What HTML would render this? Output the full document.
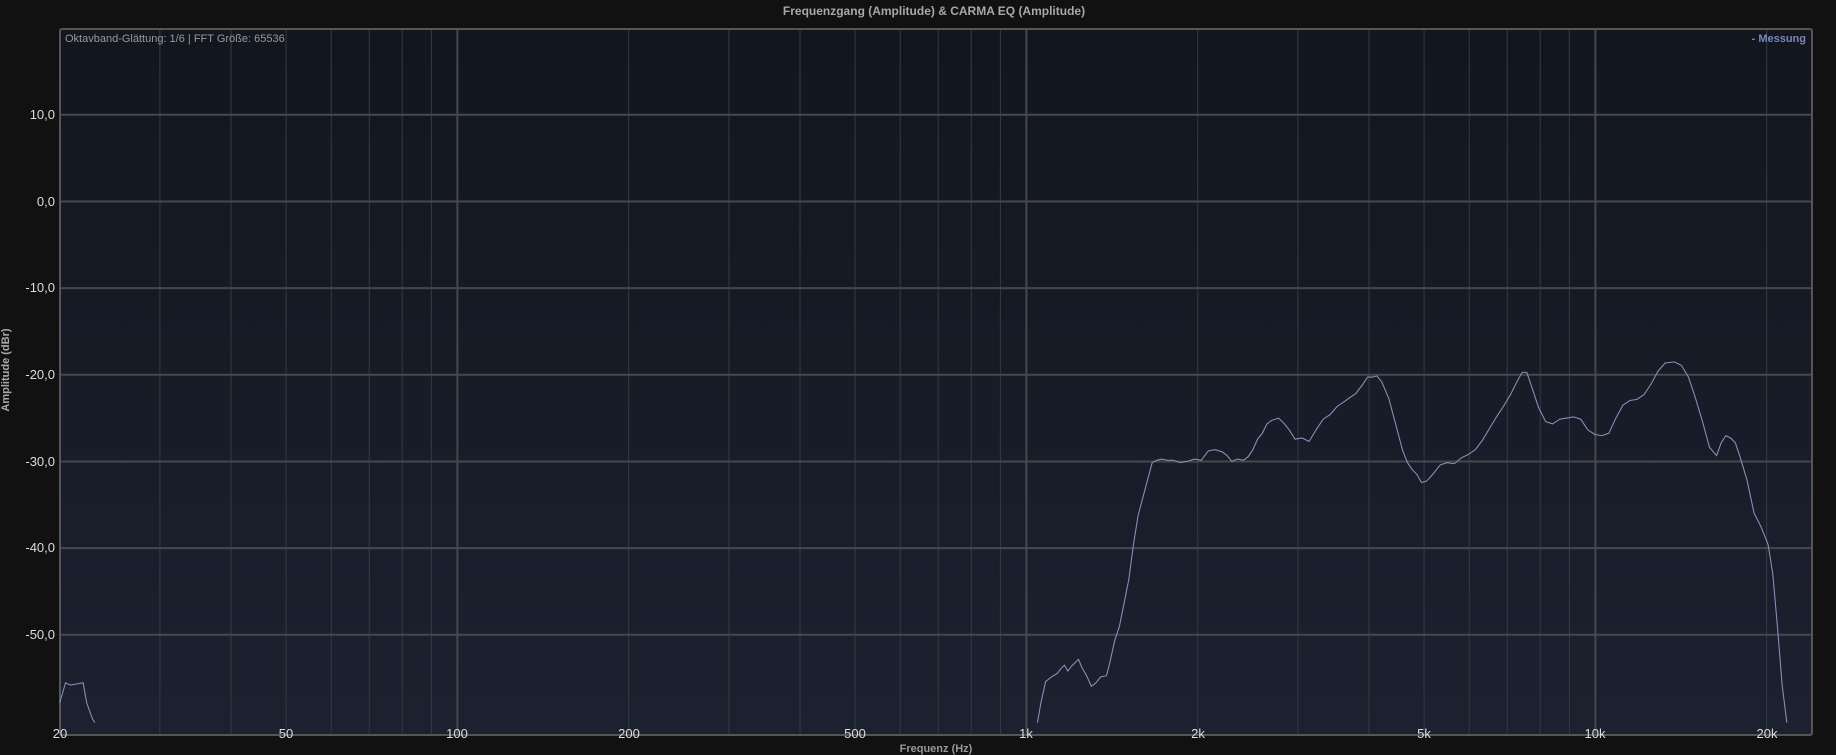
<!DOCTYPE html>
<html><head><meta charset="utf-8"><style>
html,body{margin:0;padding:0;background:#111111;width:1836px;height:753px;overflow:hidden;font-family:"Liberation Sans",sans-serif}
.t{position:absolute;white-space:nowrap}
</style></head><body>
<svg width="1836" height="753" style="position:absolute;left:0;top:0">
<defs><linearGradient id="g" x1="0" y1="0" x2="0" y2="1"><stop offset="0" stop-color="#12161e"/><stop offset="1" stop-color="#1c2130"/></linearGradient></defs>
<rect x="60" y="29" width="1752" height="706" rx="2" fill="url(#g)"/>
<g stroke="#363a42" stroke-width="1">
<line x1="159.9" y1="29" x2="159.9" y2="735"/><line x1="231" y1="29" x2="231" y2="735"/><line x1="286.1" y1="29" x2="286.1" y2="735"/><line x1="331.2" y1="29" x2="331.2" y2="735"/><line x1="369.2" y1="29" x2="369.2" y2="735"/><line x1="402.2" y1="29" x2="402.2" y2="735"/><line x1="431.4" y1="29" x2="431.4" y2="735"/>
<line x1="628.7" y1="29" x2="628.7" y2="735"/><line x1="728.9" y1="29" x2="728.9" y2="735"/><line x1="800" y1="29" x2="800" y2="735"/><line x1="855.1" y1="29" x2="855.1" y2="735"/><line x1="900.2" y1="29" x2="900.2" y2="735"/><line x1="938.2" y1="29" x2="938.2" y2="735"/><line x1="971.2" y1="29" x2="971.2" y2="735"/><line x1="1000.4" y1="29" x2="1000.4" y2="735"/>
<line x1="1197.7" y1="29" x2="1197.7" y2="735"/><line x1="1297.9" y1="29" x2="1297.9" y2="735"/><line x1="1369" y1="29" x2="1369" y2="735"/><line x1="1424.1" y1="29" x2="1424.1" y2="735"/><line x1="1469.2" y1="29" x2="1469.2" y2="735"/><line x1="1507.2" y1="29" x2="1507.2" y2="735"/><line x1="1540.2" y1="29" x2="1540.2" y2="735"/><line x1="1569.4" y1="29" x2="1569.4" y2="735"/><line x1="1766.7" y1="29" x2="1766.7" y2="735"/>
</g>
<g stroke="#46484d" stroke-width="2">
<line x1="457.4" y1="29" x2="457.4" y2="735"/><line x1="1026.4" y1="29" x2="1026.4" y2="735"/><line x1="1595.4" y1="29" x2="1595.4" y2="735"/>
<line x1="60" y1="114.8" x2="1812" y2="114.8"/><line x1="60" y1="201.5" x2="1812" y2="201.5"/><line x1="60" y1="288.1" x2="1812" y2="288.1"/><line x1="60" y1="374.8" x2="1812" y2="374.8"/><line x1="60" y1="461.5" x2="1812" y2="461.5"/><line x1="60" y1="548.1" x2="1812" y2="548.1"/><line x1="60" y1="634.8" x2="1812" y2="634.8"/>
</g>
<rect x="60" y="29" width="1752" height="706" rx="2" fill="none" stroke="#555" stroke-width="2"/>
</svg>
<svg width="1836" height="753" viewBox="0 0 1568 643" preserveAspectRatio="none" style="position:absolute;left:0;top:0">
<g fill="none" stroke="#8a92bb" stroke-width="0.9">
<polyline points="51,600 56,583 60,585 66,584 71,583 74,600 79,614 81,617"/>
<polyline points="886,617 889,600 893,582 898,578 903,575 906,571 909,568 912,573 915,569 918,566 921,563 924,570 928,577 932,586 936,583 940,578 945,577 948,565 952,547 956,535 960,515 964,495 968,465 972,440 976,425 980,410 984,395 988,393 992,392 997,393 1002,393 1008,395 1014,394 1020,392 1026,393 1032,385 1038,384 1044,386 1048,389 1052,394 1057,392 1062,393 1066,390 1070,384 1074,375 1078,370 1082,362 1086,359 1092,357 1097,362 1101,367 1106,375 1112,374 1118,377 1124,367 1130,358 1136,354 1142,347 1148,343 1152,340 1158,336 1164,328 1168,322 1172,322 1176,321 1180,326 1186,340 1190,355 1194,370 1198,385 1202,395 1206,401 1210,405 1214,412 1218,411 1222,407 1226,402 1230,397 1236,395 1242,396 1248,391 1254,388 1260,384 1266,376 1272,366 1278,356 1284,347 1290,337 1296,325 1300,318 1304,318 1308,330 1314,348 1320,360 1326,362 1332,358 1338,357 1344,356 1350,358 1356,367 1362,371 1368,372 1374,370 1380,357 1386,346 1392,342 1398,341 1404,337 1410,328 1416,317 1422,310 1430,309 1436,312 1442,322 1448,340 1454,360 1460,382 1466,389 1470,378 1474,372 1478,374 1482,378 1486,390 1492,410 1498,438 1504,450 1510,465 1514,490 1518,535 1522,585 1526,617"/>
</g>
</svg>
<div class="t" style="left:16px;width:1836px;text-align:center;top:4px;font-size:12px;font-weight:bold;color:#a8a8a8">Frequenzgang (Amplitude) &amp; CARMA EQ (Amplitude)</div>
<div class="t" style="left:65px;top:33px;font-size:11px;color:#999">Oktavband-Glättung: 1/6 | FFT Größe: 65536</div>
<div class="t" style="right:30px;top:33px;font-size:11px;font-weight:bold;color:#7a86b8">- Messung</div>
<div class="t" style="right:1781px;top:107px;font-size:13px;color:#ddd">10,0</div>
<div class="t" style="right:1781px;top:194px;font-size:13px;color:#ddd">0,0</div>
<div class="t" style="right:1781px;top:280px;font-size:13px;color:#ddd">-10,0</div>
<div class="t" style="right:1781px;top:367px;font-size:13px;color:#ddd">-20,0</div>
<div class="t" style="right:1781px;top:454px;font-size:13px;color:#ddd">-30,0</div>
<div class="t" style="right:1781px;top:540px;font-size:13px;color:#ddd">-40,0</div>
<div class="t" style="right:1781px;top:627px;font-size:13px;color:#ddd">-50,0</div>
<div class="t" style="left:-44px;top:364px;width:100px;text-align:center;transform:rotate(-90deg);font-size:11px;font-weight:bold;color:#aaa">Amplitude (dBr)</div>
<div class="t" style="left:40px;width:40px;text-align:center;top:726px;font-size:13px;color:#ddd">20</div>
<div class="t" style="left:266px;width:40px;text-align:center;top:726px;font-size:13px;color:#ddd">50</div>
<div class="t" style="left:437px;width:40px;text-align:center;top:726px;font-size:13px;color:#ddd">100</div>
<div class="t" style="left:609px;width:40px;text-align:center;top:726px;font-size:13px;color:#ddd">200</div>
<div class="t" style="left:835px;width:40px;text-align:center;top:726px;font-size:13px;color:#ddd">500</div>
<div class="t" style="left:1006px;width:40px;text-align:center;top:726px;font-size:13px;color:#ddd">1k</div>
<div class="t" style="left:1178px;width:40px;text-align:center;top:726px;font-size:13px;color:#ddd">2k</div>
<div class="t" style="left:1404px;width:40px;text-align:center;top:726px;font-size:13px;color:#ddd">5k</div>
<div class="t" style="left:1575px;width:40px;text-align:center;top:726px;font-size:13px;color:#ddd">10k</div>
<div class="t" style="left:1747px;width:40px;text-align:center;top:726px;font-size:13px;color:#ddd">20k</div>
<div class="t" style="left:0;width:1872px;text-align:center;top:743px;font-size:11px;font-weight:bold;color:#999">Frequenz (Hz)</div>
</body></html>
